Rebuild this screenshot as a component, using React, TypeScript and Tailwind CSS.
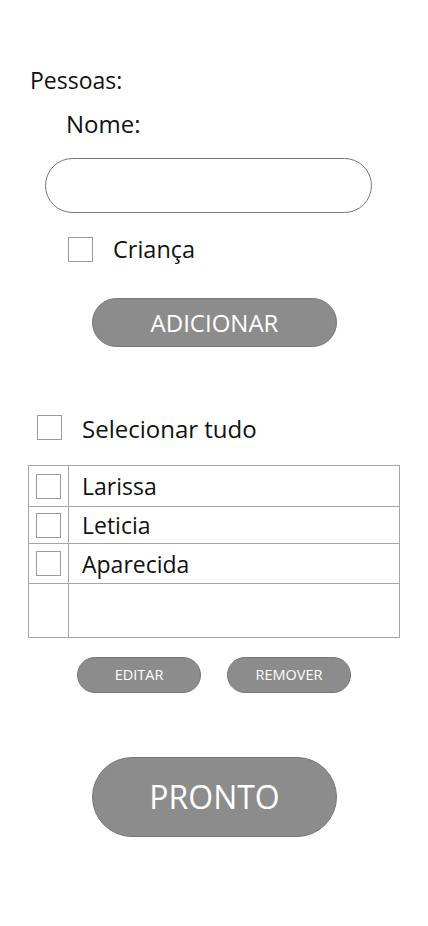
import { useState } from "react";

const people = ["Larissa", "Leticia", "Aparecida"];

function Box({ className = "" }: { className?: string }) {
  return (
    <span
      className={`block h-[25px] w-[25px] shrink-0 border border-[#9a9a9a] bg-white ${className}`}
    />
  );
}

export default function App() {
  const [name, setName] = useState("");

  return (
    <div className="min-h-[926px] w-full bg-white font-['Open_Sans',sans-serif] text-[#111]">
      <div className="flex flex-col pt-[64px]">
        <p className="ml-[30px] text-[23px] leading-[32px]">Pessoas:</p>
        <p className="ml-[66px] mt-[12px] text-[24px] leading-[32px]">Nome:</p>

        <input
          value={name}
          onChange={(e) => setName(e.target.value)}
          className="ml-[45px] mt-[18px] h-[55px] w-[327px] rounded-full border border-[#777] px-5 text-[20px] outline-none"
        />

        <label className="ml-[68px] mt-[22px] flex items-center gap-[20px]">
          <Box />
          <span className="text-[23.5px] leading-[28px]">Criança</span>
        </label>

        <button className="ml-[92px] mt-[35px] h-[49px] w-[245px] rounded-full border border-[#777] bg-[#8c8c8c] text-[24px] text-white">
          ADICIONAR
        </button>

        <label className="ml-[37px] mt-[66px] flex h-[28px] items-center gap-[20px]">
          <Box />
          <span className="pt-[3px] text-[24px] leading-[25px]">Selecionar tudo</span>
        </label>

        <div className="ml-[28px] mt-[24px] w-[372px] border border-[#a6a6a6]">
          {people.map((p, i) => (
            <div
              key={p}
              className={`flex border-b border-[#a6a6a6] ${i === 0 ? "h-[41px]" : i === 1 ? "h-[37px]" : "h-[40px]"}`}
            >
              <div className="flex w-[40px] items-center justify-center border-r border-[#a6a6a6]">
                <Box />
              </div>
              <span className="flex items-center pl-[13px] text-[23px] leading-[28px]">
                {p}
              </span>
            </div>
          ))}
          <div className="flex h-[53px]">
            <div className="w-[40px] border-r border-[#a6a6a6]" />
          </div>
        </div>

        <div className="ml-[77px] mt-[19px] flex gap-[26px]">
          <button className="h-[36px] w-[124px] rounded-full border border-[#777] bg-[#8c8c8c] text-[14.5px] text-white">
            EDITAR
          </button>
          <button className="h-[36px] w-[124px] rounded-full border border-[#777] bg-[#8c8c8c] text-[14.5px] text-white">
            REMOVER
          </button>
        </div>

        <button className="ml-[92px] mt-[64px] h-[80px] w-[245px] rounded-full border border-[#777] bg-[#8c8c8c] text-[32px] text-white">
          PRONTO
        </button>
      </div>
    </div>
  );
}
